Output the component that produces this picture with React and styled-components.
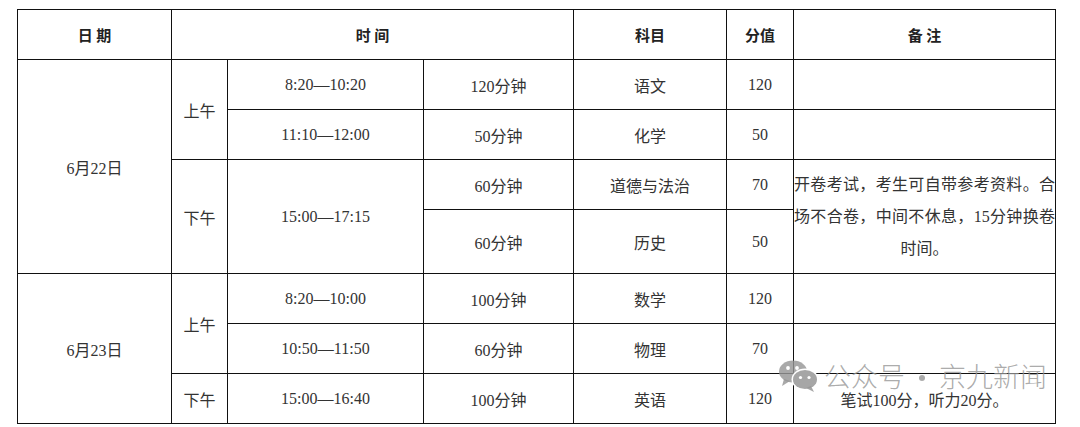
import styled, { createGlobalStyle } from 'styled-components';

const GlobalStyle = createGlobalStyle`
  html, body {
    margin: 0;
    padding: 0;
    background: #fff;
  }
`;

const Page = styled.div`
  position: relative;
  width: 1080px;
  height: 427px;
  padding: 9px 0 0 17px;
  box-sizing: border-box;
  background: #fff;
  overflow: hidden;
`;

const Table = styled.table`
  border-collapse: collapse;
  table-layout: fixed;
  width: 1038px;
  font-family: "Liberation Serif", "Noto Sans CJK SC", serif;
  font-size: 16px;
  color: #333;
`;

const Row = styled.tr`
  height: ${(p) => p.$h || 50}px;
`;

const Th = styled.th`
  border: 1px solid #111;
  padding: 0;
  font-family: "Noto Sans CJK SC", sans-serif;
  font-weight: 700;
  font-size: 15px;
  color: #222;
  text-align: center;
  vertical-align: middle;
`;

const Td = styled.td`
  border: 1px solid #111;
  padding: 0;
  text-align: center;
  vertical-align: middle;
`;

const Note = styled(Td)`
  text-align: justify;
  text-align-last: center;
  line-height: 32px;
`;

const Watermark = styled.div`
  position: absolute;
  left: 778px;
  top: 359px;
  display: flex;
  align-items: center;
  pointer-events: none;
`;

const MarkText = styled.span`
  font-family: "Noto Sans CJK SC", sans-serif;
  font-weight: 300;
  font-size: 27px;
  line-height: 34px;
  color: rgba(150, 150, 150, 0.8);
  white-space: nowrap;
  margin-left: ${(p) => p.$ml || 0}px;
`;

const Dot = styled.span`
  display: inline-block;
  width: 6px;
  height: 6px;
  margin: 3px 14px 0;
  border-radius: 50%;
  background: rgba(150, 150, 150, 0.8);
`;

function WeChatIcon() {
  return (
    <svg width="41" height="32" viewBox="0 0 41 32">
      <g fill="rgba(150,150,150,0.82)">
        <ellipse cx="15" cy="11.5" rx="14" ry="11" />
        <path d="M6 19 L4 26 L12 21 Z" />
      </g>
      <ellipse cx="27" cy="19.5" rx="13.5" ry="11" fill="#fff" />
      <g fill="rgba(150,150,150,0.85)">
        <ellipse cx="27" cy="19.5" rx="12" ry="9.6" />
        <path d="M33 26 L36 32 L28 28 Z" />
      </g>
      <g fill="#fff">
        <circle cx="10" cy="8" r="1.9" />
        <circle cx="19" cy="8" r="1.9" />
        <circle cx="22.5" cy="17.5" r="1.6" />
        <circle cx="31" cy="17.5" r="1.6" />
      </g>
    </svg>
  );
}

export default function App() {
  return (
    <Page>
      <GlobalStyle />
      <Table>
        <colgroup>
          <col style={{ width: 154 }} />
          <col style={{ width: 56 }} />
          <col style={{ width: 196 }} />
          <col style={{ width: 150 }} />
          <col style={{ width: 153 }} />
          <col style={{ width: 67 }} />
          <col style={{ width: 262 }} />
        </colgroup>
        <thead>
          <Row>
            <Th>日 期</Th>
            <Th colSpan={3}>时 间</Th>
            <Th>科目</Th>
            <Th>分值</Th>
            <Th>备 注</Th>
          </Row>
        </thead>
        <tbody>
          <Row>
            <Td rowSpan={4}>6月22日</Td>
            <Td rowSpan={2}>上午</Td>
            <Td>8:20—10:20</Td>
            <Td>120分钟</Td>
            <Td>语文</Td>
            <Td>120</Td>
            <Td />
          </Row>
          <Row>
            <Td>11:10—12:00</Td>
            <Td>50分钟</Td>
            <Td>化学</Td>
            <Td>50</Td>
            <Td />
          </Row>
          <Row>
            <Td rowSpan={2}>下午</Td>
            <Td rowSpan={2}>15:00—17:15</Td>
            <Td>60分钟</Td>
            <Td>道德与法治</Td>
            <Td>70</Td>
            <Note rowSpan={2}>开卷考试，考生可自带参考资料。合场不合卷，中间不休息，15分钟换卷时间。</Note>
          </Row>
          <Row $h={64}>
            <Td>60分钟</Td>
            <Td>历史</Td>
            <Td>50</Td>
          </Row>
          <Row>
            <Td rowSpan={3}>6月23日</Td>
            <Td rowSpan={2}>上午</Td>
            <Td>8:20—10:00</Td>
            <Td>100分钟</Td>
            <Td>数学</Td>
            <Td>120</Td>
            <Td />
          </Row>
          <Row>
            <Td>10:50—11:50</Td>
            <Td>60分钟</Td>
            <Td>物理</Td>
            <Td>70</Td>
            <Td />
          </Row>
          <Row>
            <Td>下午</Td>
            <Td>15:00—16:40</Td>
            <Td>100分钟</Td>
            <Td>英语</Td>
            <Td>120</Td>
            <Td>笔试100分，听力20分。</Td>
          </Row>
        </tbody>
      </Table>
      <Watermark>
        <WeChatIcon />
        <MarkText $ml={5}>公众号</MarkText>
        <Dot />
        <MarkText>京九新闻</MarkText>
      </Watermark>
    </Page>
  );
}
